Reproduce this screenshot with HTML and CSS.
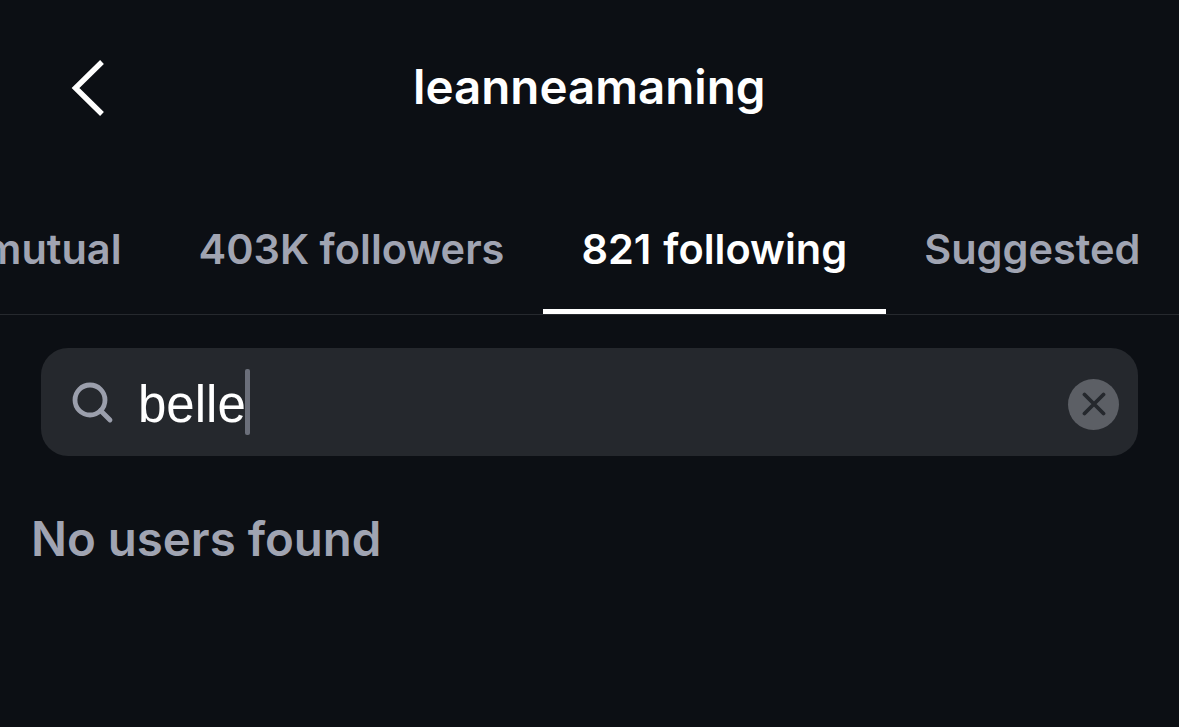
FILE: index.html
```html
<!DOCTYPE html>
<html lang="en">
<head>
<meta charset="utf-8">
<title>leanneamaning</title>
<link rel="stylesheet" href="styles.css">
</head>
<body>
<main class="screen">
  <header class="topbar">
    <button class="back" aria-label="Back">
      <svg width="36" height="58" viewBox="0 0 36 58"><path d="M33 3 L6.5 29 L33 55" fill="none" stroke="#fff" stroke-width="5.4"/></svg>
    </button>
    <h1 class="title">leanneamaning</h1>
  </header>
  <nav class="tabs">
    <a class="tab">10 mutual</a>
    <a class="tab">403K followers</a>
    <a class="tab tab-active">821 following</a>
    <a class="tab">Suggested</a>
  </nav>
  <section class="content">
    <div class="search">
      <svg class="search-icon" width="42" height="42" viewBox="0 0 42 42"><circle cx="18" cy="18" r="15" fill="none" stroke="#9b9fac" stroke-width="4.8"/><path d="M28.5 28.5 L38 38" stroke="#9b9fac" stroke-width="4.8" stroke-linecap="round"/></svg>
      <span class="query">belle</span><span class="caret"></span>
      <span class="clear">
        <svg width="24" height="24" viewBox="0 0 24 24"><path d="M2.5 2.5 L21.5 21.5 M21.5 2.5 L2.5 21.5" stroke="#25282d" stroke-width="3.8" stroke-linecap="round"/></svg>
      </span>
    </div>
    <p class="empty">No users found</p>
  </section>
</main>
</body>
</html>
```
FILE: styles.css
```css
* { box-sizing: border-box; }
html, body { margin: 0; height: 100%; }
body { background: #0c0f14; font-family: Inter, "Liberation Sans", sans-serif; overflow: hidden; }
.screen { width: 1179px; height: 727px; overflow: hidden; }
.topbar { height: 175px; padding: 59px 0 0 69px; display: flex; align-items: flex-start; }
.back { width: 36px; height: 58px; padding: 0; border: 0; background: none; display: block; flex: none; }
.back svg { display: block; }
.title { margin: -1px 0 0 308px; font-size: 47.5px; font-weight: 600; line-height: 58px; color: #fff; white-space: nowrap; }
.tabs { height: 140px; display: flex; justify-content: flex-end; border-bottom: 1px solid #26292e; }
.tab { flex: none; height: 139px; padding: 0 38.5px; font-size: 41.5px; font-weight: 600; line-height: 148px; color: #a0a4b2; white-space: nowrap; border-bottom: 5px solid transparent; margin-bottom: -1px; }
.tab-active { color: #fff; border-bottom-color: #fff; word-spacing: 1.5px; }
.content { padding: 33px 41px 0 41px; }
.search { height: 108px; border-radius: 27px; background: #25282d; display: flex; align-items: center; padding: 0 19px 0 31px; }
.search-icon { flex: none; margin-top: 2px; }
.query { margin-left: 24px; font-size: 51px; font-weight: 400; color: #fff; line-height: 58px; font-family: "Liberation Sans", sans-serif; margin-top: 5px; }
.caret { width: 5px; height: 66px; margin-left: -1px; background: #6b6f7a; border-radius: 2px; }
.clear { margin-left: auto; margin-top: 4px; width: 51px; height: 51px; border-radius: 50%; background: #5c5f65; display: flex; align-items: center; justify-content: center; flex: none; }
.clear svg { display: block; }
.empty { margin: 55px 0 0 -10px; font-size: 47.4px; font-weight: 600; line-height: 56px; color: #a0a4b2; }
```
